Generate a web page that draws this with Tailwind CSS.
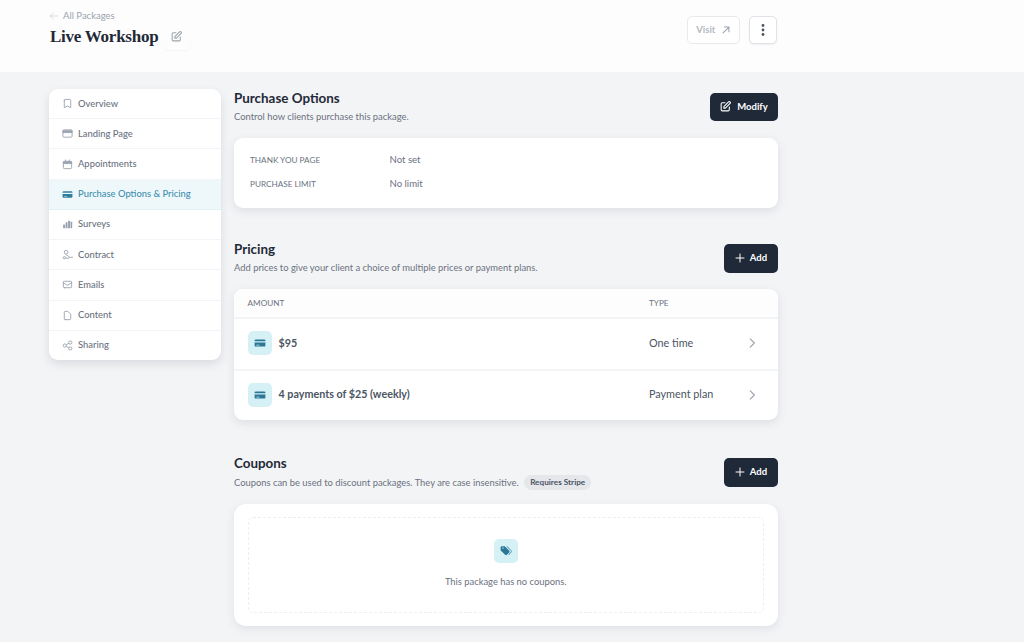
<!DOCTYPE html>
<html lang="en">
<head>
    <meta charset="UTF-8">
    <title>Live Workshop</title>
    <script src="https://cdn.jsdelivr.net/npm/@tailwindcss/browser@4"></script>
</head>
<body class="bg-[#f3f4f6] font-[Lato,sans-serif] text-[#1f2937] h-[642px] overflow-hidden">

    <!-- Header -->
    <header class="h-[72px] bg-[#fdfdfd] pl-[49px] pr-[246.7px] flex justify-between">
        <div class="pt-[10px]">
            <a class="flex items-center gap-[4px] h-[12px] text-[9.5px] leading-[12px] text-[#9ca3af]">
                <svg class="w-[10px] h-[10px] text-[#d1d5db]" fill="none" viewBox="0 0 24 24" stroke="currentColor" stroke-width="2"><path stroke-linecap="round" stroke-linejoin="round" d="M10 19l-7-7m0 0l7-7m-7 7h18"/></svg>
                All Packages
            </a>
            <div class="flex items-center mt-[1px]">
                <h1 class="font-['Liberation_Serif',serif] font-bold text-[17px] leading-[24px] text-[#1f2937] w-[113px] ml-[1px] whitespace-nowrap tracking-[-0.25px]">Live Workshop</h1>
                <span class="w-[27px] h-[27px] rounded-[5px] shadow-[0_1px_2px_rgba(0,0,0,0.04)] flex items-center justify-center text-[#9ca3af]">
                    <svg class="w-[13px] h-[13px]" fill="none" viewBox="0 0 24 24" stroke="currentColor" stroke-width="2"><path stroke-linecap="round" stroke-linejoin="round" d="M11 5H6a2 2 0 00-2 2v11a2 2 0 002 2h11a2 2 0 002-2v-5m-1.414-9.414a2 2 0 112.828 2.828L11.828 15H9v-2.828l8.586-8.586z"/></svg>
                </span>
            </div>
        </div>
        <div class="flex gap-[9px] pt-[16px]">
            <a class="w-[53px] h-[28px] rounded-[5px] border border-[#e9eaee] bg-white flex items-center justify-center gap-[6px] text-[9.5px] font-bold text-[#b4b9c2]">
                Visit
                <svg class="w-[10px] h-[10px] text-[#9ca3af]" fill="none" viewBox="0 0 24 24" stroke="currentColor" stroke-width="2.5"><path stroke-linecap="round" stroke-linejoin="round" d="M5 19L19 5m0 0H8m11 0v11"/></svg>
            </a>
            <button class="w-[28px] h-[28px] rounded-[5px] border border-[#dfe2e8] bg-white flex items-center justify-center shadow-[0_1px_2px_rgba(0,0,0,0.06)]">
                <svg class="w-[14px] h-[14px] text-[#4b5563]" viewBox="0 0 14 14" fill="currentColor"><circle cx="7" cy="2.5" r="1.4"/><circle cx="7" cy="7" r="1.4"/><circle cx="7" cy="11.5" r="1.4"/></svg>
            </button>
        </div>
    </header>

    <div class="flex items-start pl-[49px] pt-[17px]">

        <!-- Sidebar -->
        <nav class="w-[171.5px] h-[271px] bg-white rounded-[9px] shadow-[0_4px_10px_rgba(60,70,90,0.14)] overflow-hidden flex flex-col text-[9.4px] text-[#6b7280] font-medium shrink-0">
            <a class="flex-1 flex items-center gap-[5px] pl-[13px] border-b border-[#f3f4f6]">
                <svg class="w-[11px] h-[11px] text-[#9ca3af]" fill="none" viewBox="0 0 24 24" stroke="currentColor" stroke-width="2"><path stroke-linecap="round" stroke-linejoin="round" d="M5 5a2 2 0 012-2h10a2 2 0 012 2v16l-7-3.5L5 21V5z"/></svg>
                Overview
            </a>
            <a class="flex-1 flex items-center gap-[5px] pl-[13px] border-b border-[#f3f4f6]">
                <svg class="w-[11px] h-[11px] text-[#9ca3af]" fill="none" viewBox="0 0 24 24" stroke="currentColor" stroke-width="2"><rect x="2" y="4" width="20" height="16" rx="2"/><path fill="currentColor" d="M2 6h20v4H2z"/></svg>
                Landing Page
            </a>
            <a class="flex-1 flex items-center gap-[5px] pl-[13px] border-b border-[#f3f4f6]">
                <svg class="w-[11px] h-[11px] text-[#9ca3af]" fill="none" viewBox="0 0 24 24" stroke="currentColor" stroke-width="2"><rect x="3" y="5" width="18" height="16" rx="2"/><path stroke-linecap="round" d="M8 2v4M16 2v4"/><path fill="currentColor" d="M3 6h18v4H3z"/></svg>
                Appointments
            </a>
            <a class="flex-1 flex items-center gap-[5px] pl-[13px] bg-[#eef8fb] border-b border-[#e3f1f5] text-[#3f8fae]">
                <svg class="w-[11px] h-[11px] text-[#2f7f9f]" viewBox="0 0 20 20" fill="currentColor"><path d="M3 4h14a2 2 0 012 2v1H1V6a2 2 0 012-2z"/><path fill-rule="evenodd" d="M1 9h18v5a2 2 0 01-2 2H3a2 2 0 01-2-2V9zm3 4h5v1H4v-1z" clip-rule="evenodd"/></svg>
                Purchase Options &amp; Pricing
            </a>
            <a class="flex-1 flex items-center gap-[5px] pl-[13px] border-b border-[#f3f4f6]">
                <svg class="w-[11px] h-[11px] text-[#9ca3af]" viewBox="0 0 20 20" fill="currentColor"><rect x="2" y="10" width="3.5" height="7" rx=".7"/><rect x="6.5" y="6" width="3.5" height="11" rx=".7"/><rect x="11" y="3" width="3.5" height="14" rx=".7"/><rect x="15.5" y="5" width="3" height="12" rx=".7"/></svg>
                Surveys
            </a>
            <a class="flex-1 flex items-center gap-[5px] pl-[13px] border-b border-[#f3f4f6]">
                <svg class="w-[11px] h-[11px] text-[#9ca3af]" fill="none" viewBox="0 0 24 24" stroke="currentColor" stroke-width="2"><circle cx="9" cy="7" r="4"/><circle cx="5" cy="19" r="2.5"/><path stroke-linecap="round" d="M9 13c3 0 5 2 6 5h8M8 20h7"/></svg>
                Contract
            </a>
            <a class="flex-1 flex items-center gap-[5px] pl-[13px] border-b border-[#f3f4f6]">
                <svg class="w-[11px] h-[11px] text-[#9ca3af]" fill="none" viewBox="0 0 24 24" stroke="currentColor" stroke-width="2"><path stroke-linecap="round" stroke-linejoin="round" d="M3 8l7.89 5.26a2 2 0 002.22 0L21 8M5 19h14a2 2 0 002-2V7a2 2 0 00-2-2H5a2 2 0 00-2 2v10a2 2 0 002 2z"/></svg>
                Emails
            </a>
            <a class="flex-1 flex items-center gap-[5px] pl-[13px] border-b border-[#f3f4f6]">
                <svg class="w-[11px] h-[11px] text-[#9ca3af]" fill="none" viewBox="0 0 24 24" stroke="currentColor" stroke-width="2"><path stroke-linecap="round" stroke-linejoin="round" d="M7 21h10a2 2 0 002-2V9.414a1 1 0 00-.293-.707l-5.414-5.414A1 1 0 0012.586 3H7a2 2 0 00-2 2v14a2 2 0 002 2z"/></svg>
                Content
            </a>
            <a class="flex-1 flex items-center gap-[5px] pl-[13px]">
                <svg class="w-[11px] h-[11px] text-[#9ca3af]" fill="none" viewBox="0 0 24 24" stroke="currentColor" stroke-width="2"><circle cx="6" cy="12" r="3.5"/><circle cx="18" cy="5.5" r="3.5"/><circle cx="18" cy="18.5" r="3.5"/><path d="M9 10.5l6-3.5M9 13.5l6 3.5"/></svg>
                Sharing
            </a>
        </nav>

        <main class="w-[543.5px] ml-[13.5px]">

            <!-- Purchase Options -->
            <section class="flex justify-between items-start h-[49px] pt-[3.5px]">
                <div>
                    <h2 class="text-[13.4px] leading-[18px] font-bold text-[#1f2937] mt-[-3.5px]">Purchase Options</h2>
                    <p class="text-[9.4px] leading-[14px] text-[#6b7280] mt-[3px]">Control how clients purchase this package.</p>
                </div>
                <button class="w-[68px] h-[28.5px] rounded-[5px] bg-[#1f2937] text-white text-[9.5px] font-bold flex items-center justify-center gap-[5px]">
                    <svg class="w-[13px] h-[13px]" fill="none" viewBox="0 0 24 24" stroke="currentColor" stroke-width="2"><path stroke-linecap="round" stroke-linejoin="round" d="M11 5H6a2 2 0 00-2 2v11a2 2 0 002 2h11a2 2 0 002-2v-5m-1.414-9.414a2 2 0 112.828 2.828L11.828 15H9v-2.828l8.586-8.586z"/></svg>
                    Modify
                </button>
            </section>
            <div class="h-[70px] bg-white rounded-[9px] shadow-[0_3px_10px_rgba(60,70,90,0.12)] pl-[16px] pt-[10px] text-[9.6px]">
                <div class="flex items-center h-[24px]"><span class="w-[139.5px] text-[8.2px] text-[#6b7280]">THANK YOU PAGE</span><span class="text-[#6b7280]">Not set</span></div>
                <div class="flex items-center h-[24px]"><span class="w-[139.5px] text-[8.2px] text-[#6b7280]">PURCHASE LIMIT</span><span class="text-[#6b7280]">No limit</span></div>
            </div>

            <!-- Pricing -->
            <section class="flex justify-between items-start h-[45px] mt-[36px]">
                <div>
                    <h2 class="text-[13.4px] leading-[18px] font-bold text-[#1f2937] mt-[-4px]">Pricing</h2>
                    <p class="text-[9.4px] leading-[14px] text-[#6b7280] mt-[3px]">Add prices to give your client a choice of multiple prices or payment plans.</p>
                </div>
                <button class="w-[54px] h-[28.5px] rounded-[5px] bg-[#1f2937] text-white text-[9.5px] font-bold flex items-center justify-center gap-[4px]">
                    <svg class="w-[12px] h-[12px]" fill="none" viewBox="0 0 24 24" stroke="currentColor" stroke-width="2"><path stroke-linecap="round" stroke-linejoin="round" d="M12 4v16m8-8H4"/></svg>
                    Add
                </button>
            </section>
            <div class="h-[131px] bg-white rounded-[9px] shadow-[0_3px_10px_rgba(60,70,90,0.12)] overflow-hidden">
                <div class="h-[30px] flex items-center bg-[#fdfdfd] border-b-2 border-[#f3f4f6] pl-[13.5px] text-[8.2px] text-[#6b7280]">
                    <span class="w-[401.5px]">AMOUNT</span><span>TYPE</span>
                </div>
                <div class="h-[52px] flex items-center pl-[13.5px] pb-[2px] border-b-2 border-[#f3f4f6]">
                    <span class="w-[24px] h-[24px] rounded-[5px] bg-[#d6f1f6] flex items-center justify-center mr-[7px]">
                        <svg class="w-[12px] h-[12px] text-[#2b7796]" viewBox="0 0 20 20" fill="currentColor"><path d="M3 4h14a2 2 0 012 2v1H1V6a2 2 0 012-2z"/><path fill-rule="evenodd" d="M1 9h18v5a2 2 0 01-2 2H3a2 2 0 01-2-2V9zm3 4h5v1H4v-1z" clip-rule="evenodd"/></svg>
                    </span>
                    <span class="w-[370.5px] text-[10.75px] font-bold text-[#4b5563]">$95</span>
                    <span class="w-[96px] text-[10.8px] text-[#4b5563]">One time</span>
                    <svg class="w-[14px] h-[14px] text-[#9ca3af]" fill="none" viewBox="0 0 24 24" stroke="currentColor" stroke-width="2"><path stroke-linecap="round" stroke-linejoin="round" d="M9 5l7 7-7 7"/></svg>
                </div>
                <div class="h-[49px] flex items-center pl-[13.5px] pb-[2px]">
                    <span class="w-[24px] h-[24px] rounded-[5px] bg-[#d6f1f6] flex items-center justify-center mr-[7px]">
                        <svg class="w-[12px] h-[12px] text-[#2b7796]" viewBox="0 0 20 20" fill="currentColor"><path d="M3 4h14a2 2 0 012 2v1H1V6a2 2 0 012-2z"/><path fill-rule="evenodd" d="M1 9h18v5a2 2 0 01-2 2H3a2 2 0 01-2-2V9zm3 4h5v1H4v-1z" clip-rule="evenodd"/></svg>
                    </span>
                    <span class="w-[370.5px] text-[10.75px] font-bold text-[#4b5563]">4 payments of $25 (weekly)</span>
                    <span class="w-[96px] text-[10.8px] text-[#4b5563]">Payment plan</span>
                    <svg class="w-[14px] h-[14px] text-[#9ca3af]" fill="none" viewBox="0 0 24 24" stroke="currentColor" stroke-width="2"><path stroke-linecap="round" stroke-linejoin="round" d="M9 5l7 7-7 7"/></svg>
                </div>
            </div>

            <!-- Coupons -->
            <section class="flex justify-between items-start h-[45.5px] mt-[38px]">
                <div>
                    <h2 class="text-[13.4px] leading-[18px] font-bold text-[#1f2937] mt-[-4px]">Coupons</h2>
                    <div class="flex items-center gap-[5.5px] mt-[3px]">
                        <p class="text-[9.4px] leading-[14px] text-[#6b7280]">Coupons can be used to discount packages. They are case insensitive.</p>
                        <span class="h-[15px] px-[6px] rounded-full bg-[#e5e7eb] text-[8.2px] leading-[15px] font-bold text-[#4b5563]">Requires Stripe</span>
                    </div>
                </div>
                <button class="w-[54px] h-[28.5px] rounded-[5px] bg-[#1f2937] text-white text-[9.5px] font-bold flex items-center justify-center gap-[4px]">
                    <svg class="w-[12px] h-[12px]" fill="none" viewBox="0 0 24 24" stroke="currentColor" stroke-width="2"><path stroke-linecap="round" stroke-linejoin="round" d="M12 4v16m8-8H4"/></svg>
                    Add
                </button>
            </section>
            <div class="h-[122.5px] bg-white rounded-[12px] shadow-[0_3px_10px_rgba(60,70,90,0.10)] p-[13.5px]">
                <div class="h-[95.5px] rounded-[5px] border border-dashed border-[#eceef1] flex flex-col items-center pt-[21px]">
                    <span class="w-[24px] h-[24px] rounded-[5px] bg-[#d6f1f6] flex items-center justify-center">
                        <svg class="w-[12px] h-[12px] text-[#2b7796]" viewBox="0 0 20 20" fill="currentColor"><path fill-rule="evenodd" d="M1 4a2 2 0 012-2h4c.5 0 1 .2 1.4.6l7 7a2 2 0 010 2.8l-4 4a2 2 0 01-2.8 0l-7-7A2 2 0 011 8V4zm3 1a1 1 0 100-.01z" clip-rule="evenodd"/><path d="M11 2.5l1-.5 7 7.2a3 3 0 010 2.8l-4 4.5-.8-.5 4-4.5a2 2 0 000-1.8z"/></svg>
                    </span>
                    <p class="mt-[12px] text-[9.4px] leading-[14px] text-[#6b7280]">This package has no coupons.</p>
                </div>
            </div>
        </main>
    </div>
</body>
</html>
